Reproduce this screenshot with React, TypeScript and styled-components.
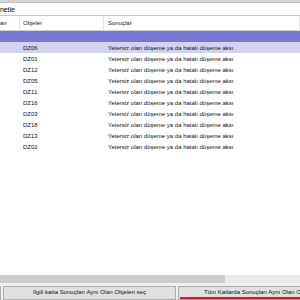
import React from "react";
import styled, { createGlobalStyle } from "styled-components";

const Global = createGlobalStyle`
  html, body { margin: 0; padding: 0; background: #fff; overflow: hidden; }
  * { box-sizing: border-box; }
`;

const Window = styled.div`
  width: 300px;
  height: 300px;
  display: flex;
  flex-direction: column;
  background: #ffffff;
  font-family: "Liberation Sans", Arial, sans-serif;
  font-size: 6px;
  color: #111;
  overflow: hidden;
`;

const TopStrip = styled.div`
  height: 3px;
  background: #d6d6d6;
  border-bottom: 1px solid #c4c4c4;
  flex: none;
`;

const Title = styled.div`
  height: 13px;
  display: flex;
  align-items: center;
  padding-left: 0;
  font-size: 6.8px;
  color: #000;
  border-bottom: 1px solid #c8c8c8;
  flex: none;
`;

const Header = styled.div`
  display: grid;
  grid-template-columns: 20px 84px 1fr;
  height: 15px;
  border-bottom: 1px solid #d0d0d0;
  flex: none;
  color: #222;
`;

const HeadCell = styled.div<{ $pad: number }>`
  display: flex;
  align-items: center;
  padding-left: ${(p) => p.$pad}px;
  border-right: 1px solid #e2e2e2;
  overflow: hidden;
  white-space: nowrap;
`;

const Row = styled.div<{ $bg?: string }>`
  display: grid;
  grid-template-columns: 20px 84px 1fr;
  height: 11px;
  background: ${(p) => p.$bg ?? "transparent"};
  flex: none;
`;

const Cell = styled.div<{ $pad?: number }>`
  display: flex;
  align-items: center;
  padding-left: ${(p) => p.$pad ?? 3}px;
  white-space: nowrap;
  overflow: hidden;
`;

const Spacer = styled.div`
  flex: 1;
`;

const ScrollTrack = styled.div`
  height: 8px;
  background: #e9e9e9;
  display: flex;
  flex: none;
`;

const ScrollThumb = styled.div`
  background: #cdcdcd;
  height: 100%;
`;

const ButtonBar = styled.div`
  height: 17px;
  display: flex;
  gap: 2px;
  padding: 3px 0 0 0;
  background: #f0f0f0;
  flex: none;
`;

const Stub = styled.div`
  width: 3px;
  border: 1px solid #adadad;
  border-left: none;
  background: #e1e1e1;
`;

const Button = styled.div<{ $width: number; $active?: boolean }>`
  position: relative;
  width: ${(p) => p.$width}px;
  flex: none;
  border: 1px solid #adadad;
  background: #e1e1e1;
  display: flex;
  align-items: center;
  justify-content: center;
  white-space: nowrap;
  overflow: hidden;
  padding-bottom: 2px;
  ${(p) => (p.$active ? "border-right: none; justify-content: flex-start; padding-left: 25px;" : "")}
`;

const Underline = styled.div`
  position: absolute;
  left: 1px;
  right: 0;
  bottom: 0;
  height: 2px;
  background: #e8141c;
`;

const rows = ["DZ06", "DZ01", "DZ12", "DZ05", "DZ11", "DZ16", "DZ03", "DZ18", "DZ13", "DZ02"];
const result = "Yetersiz olan döşeme ya da hatalı döşeme aksı";

export default function App() {
  return (
    <>
      <Global />
      <Window>
        <TopStrip />
        <Title>netle</Title>
        <Header>
          <HeadCell $pad={0}>an</HeadCell>
          <HeadCell $pad={3}>Objeler</HeadCell>
          <HeadCell $pad={4}>Sonuçlar</HeadCell>
        </Header>
        <Row $bg="#7878d8">
          <Cell />
          <Cell />
          <Cell />
        </Row>
        {rows.map((r, i) => (
          <Row key={r} $bg={i === 0 ? "#d3d3f1" : undefined}>
            <Cell />
            <Cell>{r}</Cell>
            <Cell $pad={4}>{result}</Cell>
          </Row>
        ))}
        <Spacer />
        <ScrollTrack>
          <ScrollThumb style={{ width: 225 }} />
        </ScrollTrack>
        <ButtonBar>
          <Stub />
          <Button $width={173}>İlgili katta Sonuçları Aynı Olan Objeleri seç</Button>
          <Button $width={130} $active>
            Tüm Katlarda Sonuçları Aynı Olan Objeleri seç
            <Underline />
          </Button>
        </ButtonBar>
      </Window>
    </>
  );
}
